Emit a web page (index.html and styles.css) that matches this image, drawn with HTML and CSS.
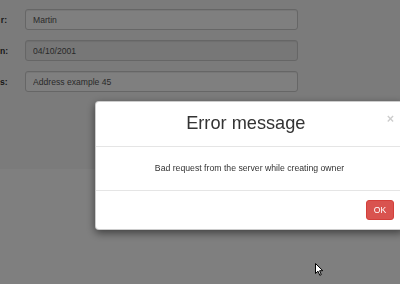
FILE: index.html
```html
<!DOCTYPE html>
<html lang="en">
<head>
  <meta charset="UTF-8">
  <title>New owner</title>
  <link rel="stylesheet" href="styles.css">
</head>
<body>

<div class="panel">
  <div class="form">
    <div class="form-row">
      <label>r:</label>
      <input type="text" value="Martin">
    </div>
    <div class="form-row">
      <label>n:</label>
      <input type="text" value="04/10/2001" readonly class="readonly">
    </div>
    <div class="form-row">
      <label>s:</label>
      <input type="text" value="Address example 45">
    </div>
  </div>
</div>

<div class="backdrop"></div>

<div class="modal">
  <div class="modal-header">
    <span class="close">&times;</span>
    <h2 class="modal-title">Error message</h2>
  </div>
  <div class="modal-body">Bad request from the server while creating owner</div>
  <div class="modal-footer">
    <button class="btn-danger">OK</button>
  </div>
</div>

<svg class="cursor" width="10" height="14" viewBox="0 0 10 14">
  <path d="M0.5 0.5 L0.5 10.5 L3 8.2 L4.8 12.3 L6.3 11.6 L4.6 7.7 L7.8 7.7 Z" fill="#fff" stroke="#000" stroke-width="1" stroke-linejoin="round"/>
</svg>

</body>
</html>
```

FILE: styles.css
```css
body {
  margin: 0;
  background: #fff;
  font-family: "Liberation Sans", Arial, sans-serif;
  color: #333;
  overflow: hidden;
}
.panel {
  background: #f6f6f6;
  height: 160px;
  padding-top: 9px;
}
.form-row {
  display: flex;
  align-items: center;
  margin-bottom: 10px;
}
.form-row label {
  width: 25px;
  padding-right: 18px;
  text-align: right;
  font-weight: bold;
  font-size: 8.6px;
  box-sizing: border-box;
  white-space: nowrap;
}
.form-row input {
  width: 273px;
  height: 21px;
  box-sizing: border-box;
  border: 1px solid #ccc;
  border-radius: 3px;
  padding: 0 7px;
  font-family: "Liberation Sans", Arial, sans-serif;
  font-size: 8.6px;
  color: #555;
  background: #fff;
  box-shadow: inset 0 1px 1px rgba(0,0,0,0.075);
}
.form-row input.readonly {
  background: #eee;
}
.backdrop {
  position: fixed;
  top: 0;
  left: 0;
  right: 0;
  bottom: 0;
  background: rgba(0,0,0,0.5);
}
.modal {
  position: fixed;
  left: 95px;
  top: 101px;
  width: 307px;
  background: #fff;
  border: 1px solid rgba(0,0,0,0.2);
  border-radius: 4px;
  box-shadow: 0 3px 9px rgba(0,0,0,0.5);
}
.modal-header {
  padding: 8px 9px 9px;
  border-bottom: 1px solid #e5e5e5;
}
.close {
  float: right;
  font-size: 12.6px;
  font-weight: bold;
  line-height: 1;
  color: #000;
  opacity: 0.2;
  margin-top: 3px;
}
.modal-title {
  margin: 0;
  text-align: center;
  font-weight: normal;
  font-size: 18.2px;
  line-height: 27px;
}
.modal-body {
  padding: 15px 9px;
  text-align: center;
  font-size: 8.7px;
  line-height: 13px;
}
.modal-footer {
  padding: 9px;
  border-top: 1px solid #e5e5e5;
  text-align: right;
}
.btn-danger {
  height: 20px;
  width: 28px;
  padding: 0;
  border: 1px solid #d43f3a;
  border-radius: 3px;
  background: #d9534f;
  color: #fff;
  font-family: "Liberation Sans", Arial, sans-serif;
  font-size: 8.6px;
  vertical-align: top;
}
.cursor {
  position: fixed;
  left: 315px;
  top: 263px;
}
```
